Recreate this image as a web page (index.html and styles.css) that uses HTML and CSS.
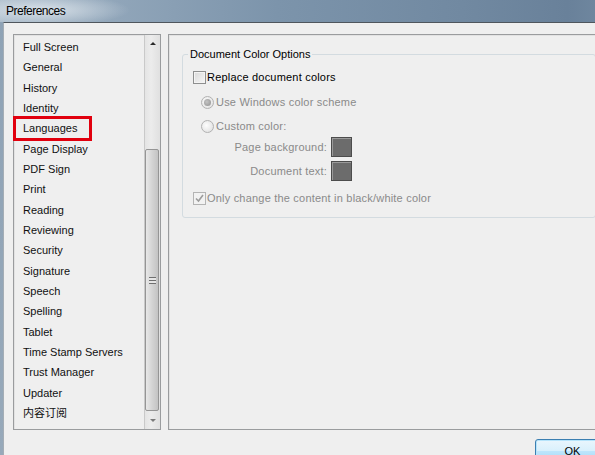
FILE: index.html
```html
<!DOCTYPE html>
<html lang="en">
  <head>
    <meta charset="UTF-8" />
    <title>Preferences</title>
    <link rel="stylesheet" href="styles.css">
  </head>
  <body>
    <div class="window">
      <div class="titlebar">
        <span class="title">Preferences</span>
      </div>

      <div class="client">
        <div class="panes">
          <div class="listbox">
            <ul class="categories">
              <li>Full Screen</li>
              <li>General</li>
              <li>History</li>
              <li>Identity</li>
              <li class="marked">Languages</li>
              <li>Page Display</li>
              <li>PDF Sign</li>
              <li>Print</li>
              <li>Reading</li>
              <li>Reviewing</li>
              <li>Security</li>
              <li>Signature</li>
              <li>Speech</li>
              <li>Spelling</li>
              <li>Tablet</li>
              <li>Time Stamp Servers</li>
              <li>Trust Manager</li>
              <li>Updater</li>
              <li lang="zh">内容订阅</li>
            </ul>
            <div class="scrollbar">
              <div class="sb-btn sb-up"></div>
              <div class="sb-track">
                <div class="sb-thumb"><span class="grip"></span></div>
              </div>
              <div class="sb-btn sb-down"></div>
            </div>
          </div>

          <div class="settings">
            <fieldset class="group">
              <legend>Document Color Options</legend>

              <div class="option first">
                <span class="check"></span>
                <span>Replace document colors</span>
              </div>

              <div class="option sub disabled">
                <span class="radio on"></span>
                <span>Use Windows color scheme</span>
              </div>

              <div class="option sub disabled radio-row">
                <span class="radio"></span>
                <span>Custom color:</span>
              </div>

              <div class="swatch-row disabled">
                <span class="swatch-label">Page background:</span>
                <span class="swatch"></span>
              </div>

              <div class="swatch-row disabled">
                <span class="swatch-label">Document text:</span>
                <span class="swatch"></span>
              </div>

              <div class="option disabled last">
                <span class="check ticked">
                  <svg width="11" height="11" viewBox="0 0 11 11">
                    <path d="M2 5.5 L4.5 8 L9 2" fill="none" stroke="#9c9c9c" stroke-width="1.6" />
                  </svg>
                </span>
                <span>Only change the content in black/white color</span>
              </div>
            </fieldset>
          </div>
        </div>

        <div class="buttons">
          <button class="btn default">OK</button>
        </div>
      </div>
    </div>
  </body>
</html>
```

FILE: styles.css
```css
* {
  margin: 0;
  padding: 0;
  box-sizing: border-box;
}

body {
  width: 595px;
  height: 455px;
  overflow: hidden;
  font-family: "Liberation Sans", "Noto Sans CJK SC", sans-serif;
  font-size: 11px;
  color: #000;
  background: #8ea1b3;
}

.window {
  width: 660px;
  height: 455px;
  display: flex;
  flex-direction: column;
  background: linear-gradient(180deg, #8ea2b5, #97a9ba);
}

.titlebar {
  height: 22px;
  flex-shrink: 0;
  display: flex;
  align-items: center;
  padding-left: 6px;
  background: radial-gradient(ellipse 90px 16px at 40px 10px, rgba(226, 233, 239, 0.85), rgba(226, 233, 239, 0)),
    linear-gradient(90deg, #a9bac9 0%, #90a5b9 18%, #7c94ab 42%, #7189a1 70%, #69819a 86%, #7b92a8 100%);
}

.title {
  font-size: 12px;
  letter-spacing: -0.5px;
  color: #000;
}

.client {
  flex: 1;
  margin-left: 3px;
  border-top: 1px solid #4f565d;
  border-left: 1px solid #a4adb5;
  background: #efefef;
  padding: 11px 50px 0 9px;
}

.panes {
  display: flex;
  gap: 7px;
}

/* category list */

.listbox {
  width: 148px;
  height: 396px;
  flex-shrink: 0;
  display: flex;
  border: 1px solid #9a9c9e;
  box-shadow: inset 1px 1px 0 #e2e2e2;
  background: #efefef;
}

.categories {
  list-style: none;
  flex: 1;
  padding: 2px 0 0 9px;
}

.categories li {
  height: 20.33px;
  line-height: 20.33px;
  white-space: nowrap;
  color: #111;
  position: relative;
}

.categories li.marked::after {
  content: "";
  box-sizing: border-box;
  position: absolute;
  left: -10px;
  top: -2px;
  width: 79px;
  height: 25px;
  border: 3px solid #e1000e;
}

.scrollbar {
  width: 16px;
  display: flex;
  flex-direction: column;
  border-left: 1px solid #c9c9c9;
  background: linear-gradient(90deg, #e4e4e4, #ececec 40%, #e0e0e0);
}

.sb-btn {
  height: 17px;
  display: flex;
  align-items: center;
  justify-content: center;
}

.sb-up::before,
.sb-down::before {
  content: "";
  width: 0;
  height: 0;
  border-left: 3px solid transparent;
  border-right: 3px solid transparent;
}

.sb-up::before {
  border-bottom: 3px solid #2a2a2a;
}

.sb-down::before {
  border-top: 3px solid #7a7a7a;
}

.sb-track {
  flex: 1;
  padding: 97px 1px 0 0;
}

.sb-thumb {
  height: 262px;
  border: 1px solid #959595;
  border-radius: 2px;
  background: linear-gradient(90deg, #e8e8e8, #d6d6d6 45%, #c3c3c3);
  display: flex;
  align-items: center;
  justify-content: center;
}

.grip {
  width: 7px;
  height: 7px;
  background: repeating-linear-gradient(180deg, #6f6f6f 0 1px, #e6e6e6 1px 3px);
}

/* settings panel */

.settings {
  flex: 1;
  height: 396px;
  border: 1px solid #9a9c9e;
  box-shadow: inset 1px 1px 0 #e2e2e2;
  background: #efefef;
  letter-spacing: 0.2px;
}

.group {
  margin: 11px 13px 0 13px;
  padding: 0 10px 11px 10px;
  border: 1px solid #d3dbe0;
  border-radius: 3px;
}

.group legend {
  margin-left: -5px;
  padding: 0 2px;
  line-height: 16px;
  letter-spacing: 0;
}

.option {
  display: flex;
  align-items: center;
  height: 16px;
  gap: 1px;
}

.option.first {
  margin-top: 7px;
}

.option.sub {
  padding-left: 8px;
  gap: 2px;
  margin-top: 9px;
}

.option.radio-row {
  margin-top: 8px;
}

.option.last {
  margin-top: 8px;
}

.disabled {
  color: #8a8a8a;
}

.check {
  width: 13px;
  height: 13px;
  border: 1px solid #8e8f8f;
  background: linear-gradient(135deg, #d9d9d9, #f7f7f7);
  box-shadow: inset 0 0 0 1px #f4f4f4;
  display: flex;
  align-items: center;
  justify-content: center;
}

.check.ticked {
  border-color: #b4b4b4;
  background: #f2f2f2;
  box-shadow: none;
}

.radio {
  width: 13px;
  height: 13px;
  border-radius: 50%;
  border: 1px solid #b2b2b2;
  background: radial-gradient(circle at 40% 40%, #fdfdfd, #dcdcdc);
  position: relative;
}

.radio.on::after {
  content: "";
  position: absolute;
  left: 2px;
  top: 2px;
  width: 7px;
  height: 7px;
  border-radius: 50%;
  background: radial-gradient(circle at 40% 40%, #c4c4c4, #8f8f8f);
}

.swatch-row {
  display: flex;
  align-items: center;
  height: 22px;
  margin-top: 2px;
}

.swatch-label {
  width: 134px;
  text-align: right;
}

.swatch {
  width: 21px;
  height: 20px;
  margin-left: 4px;
  background: #6c6c6c;
  border: 1px solid #4c4c4c;
  box-shadow: inset 1px 1px 0 #9a9a9a;
}

/* dialog buttons */

.buttons {
  display: flex;
  justify-content: flex-end;
  padding-top: 9px;
}

.btn {
  width: 75px;
  height: 23px;
  font-family: "Liberation Sans", sans-serif;
  font-size: 11px;
  color: #000;
  border-radius: 3px;
  border: 1px solid #707070;
  background: linear-gradient(180deg, #f2f2f2, #ebebeb 50%, #dddddd 51%, #cfcfcf);
}

.btn.default {
  border-color: #3c7fb1;
  box-shadow: inset 0 0 0 1px #b6e4fb;
  background: linear-gradient(180deg, #eaf6fd, #d9f0fc 50%, #bee6fd 51%, #a7d9f5);
}
```
